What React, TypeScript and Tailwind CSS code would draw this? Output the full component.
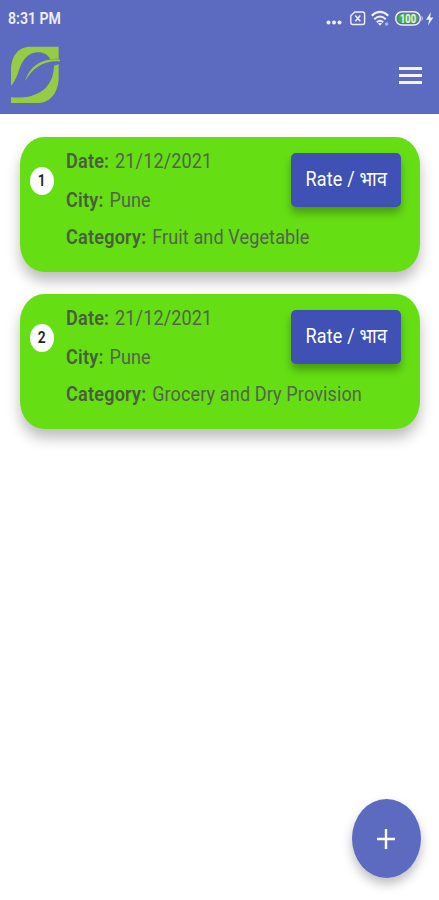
import { useState } from "react";

type Entry = {
  id: number;
  date: string;
  city: string;
  category: string;
};

const entries: Entry[] = [
  { id: 1, date: "21/12/2021", city: "Pune", category: "Fruit and Vegetable" },
  { id: 2, date: "21/12/2021", city: "Pune", category: "Grocery and Dry Provision" },
];

function StatusBar() {
  return (
    <div className="flex h-9 items-center justify-between pl-2 pr-[3px] pt-0.5 text-[#f0f0fc]">
      <span className="origin-left scale-x-[0.88] text-base font-semibold leading-5">8:31 PM</span>
      <svg width="111" height="20" viewBox="0 0 111 20" fill="none" aria-hidden="true">
        <g fill="currentColor">
          <circle cx="3.5" cy="13.4" r="2" />
          <circle cx="9" cy="13.4" r="2" />
          <circle cx="14.5" cy="13.4" r="2" />
        </g>
        <path
          d="M29.8 3H37.6Q39.6 3 39.6 5V13.5Q39.6 15.5 37.6 15.5H27.8Q25.8 15.5 25.8 13.5V6.8Z"
          stroke="currentColor"
          strokeWidth="1.4"
        />
        <path d="M30.3 6.4L35.3 12.2M35.3 6.4L30.3 12.2" stroke="currentColor" strokeWidth="1.5" />
        <g stroke="currentColor" strokeWidth="2">
          <path d="M46.7 6.7Q55 -0.9 63.3 6.7" />
          <path d="M49.3 10.2Q55 4.9 60.7 10.2" />
          <path d="M51.8 13.3Q55 10.3 58.2 13.3" />
        </g>
        <path d="M53 14.5Q55 12.9 57 14.5L55 16.8Z" fill="currentColor" />
        <circle cx="61.6" cy="15" r="1.8" fill="#a9b3f0" />
        <rect x="70.7" y="2.7" width="24.6" height="13.4" rx="6.5" stroke="currentColor" strokeWidth="1.5" />
        <rect x="72.8" y="4.7" width="20.4" height="9.4" rx="4.5" fill="#49ad3b" />
        <path d="M96.7 6.6Q98.7 9.4 96.7 12.2Z" fill="currentColor" />
        <text
          x="83"
          y="13.6"
          textAnchor="middle"
          textLength="16"
          lengthAdjust="spacingAndGlyphs"
          fill="currentColor"
          className="text-[12px] font-bold"
        >
          100
        </text>
        <path d="M106 3L101 10.8H104.2L103 16.5L108.3 8.6H105Z" fill="currentColor" />
      </svg>
    </div>
  );
}

function Logo() {
  return (
    <svg width="50" height="58" viewBox="30 18 150 174" fill="#95cc43" aria-label="Leaf logo">
      <path d="M33 138V92C33 49 53 20 92 20H176V57C168 56 160 56 151 58C140 34 104 29 80 50C55 72 60 105 33 138Z" />
      <path d="M76 123C86 85 122 52 180 59V64C132 60 96 84 76 123Z" />
      <path d="M162 77L176 73V112C176 157 151 189 115 189H33V172C102 178 160 152 162 77Z" />
    </svg>
  );
}

function Field({ label, value }: { label: string; value: string }) {
  return (
    <p className="w-max origin-left scale-x-[0.902] text-[20px] leading-6 text-[#526548]">
      <b className="mr-[1.5px] font-semibold tracking-[0.25px] text-[#48603a]">{label}:</b>{" "}
      <span className="tracking-[0.13px]">{value}</span>
    </p>
  );
}

function EntryCard({ entry }: { entry: Entry }) {
  return (
    <li className="flex h-[135px] rounded-[24px/28px] bg-[#65df14] pl-[10px] pr-[19px] shadow-[0_9px_14px_rgba(0,0,0,0.26)]">
      <span className="mt-[30px] flex h-7 w-6 items-center justify-center rounded-[50%] bg-white text-[#222]">
        <span className="scale-x-[0.86] text-base font-semibold">{entry.id}</span>
      </span>
      <div className="ml-3 w-0 flex-1 pt-3">
        <Field label="Date" value={entry.date} />
        <div className="mt-[15px]">
          <Field label="City" value={entry.city} />
        </div>
        <div className="mt-[13px]">
          <Field label="Category" value={entry.category} />
        </div>
      </div>
      <button className="mt-4 flex h-[54px] w-[110px] items-center justify-center rounded-[5px] bg-[#3f51b5] pb-0.5 text-white shadow-[0_6px_9px_rgba(0,0,0,0.3)]">
        <span className="scale-x-[0.9] whitespace-nowrap text-[20px] tracking-[0.2px]">Rate / भाव</span>
      </button>
    </li>
  );
}

export default function App() {
  const [menuOpen, setMenuOpen] = useState(false);

  return (
    <div className="relative h-[900px] w-full overflow-hidden bg-white font-['Roboto','Noto_Sans',sans-serif]">
      <header className="h-[114px] bg-[#5c6bc0]">
        <StatusBar />
        <div className="flex items-center justify-between pl-[10px] pr-[17px] pt-[10px]">
          <Logo />
          <button
            aria-label="Menu"
            aria-expanded={menuOpen}
            onClick={() => setMenuOpen((open) => !open)}
            className="flex w-[23px] flex-col gap-[4px]"
          >
            <span className="h-[3px] bg-[#f4f4ff]" />
            <span className="h-[3px] bg-[#f4f4ff]" />
            <span className="h-[3px] bg-[#f4f4ff]" />
          </button>
        </div>
      </header>

      <ul className="flex flex-col gap-[22px] pl-5 pr-[19px] pt-[23px]">
        {entries.map((entry) => (
          <EntryCard key={entry.id} entry={entry} />
        ))}
      </ul>

      <button
        aria-label="Add entry"
        className="absolute bottom-[22px] right-[18px] flex h-[79px] w-[69px] items-center justify-center rounded-[50%] bg-[#5c6bc0] pr-[2px] shadow-[0_6px_11px_rgba(0,0,0,0.26)]"
      >
        <svg width="18" height="20" viewBox="0 0 18 20" stroke="#fff" strokeWidth="2.4" aria-hidden="true">
          <path d="M9 0V20M0 10H18" />
        </svg>
      </button>
    </div>
  );
}
